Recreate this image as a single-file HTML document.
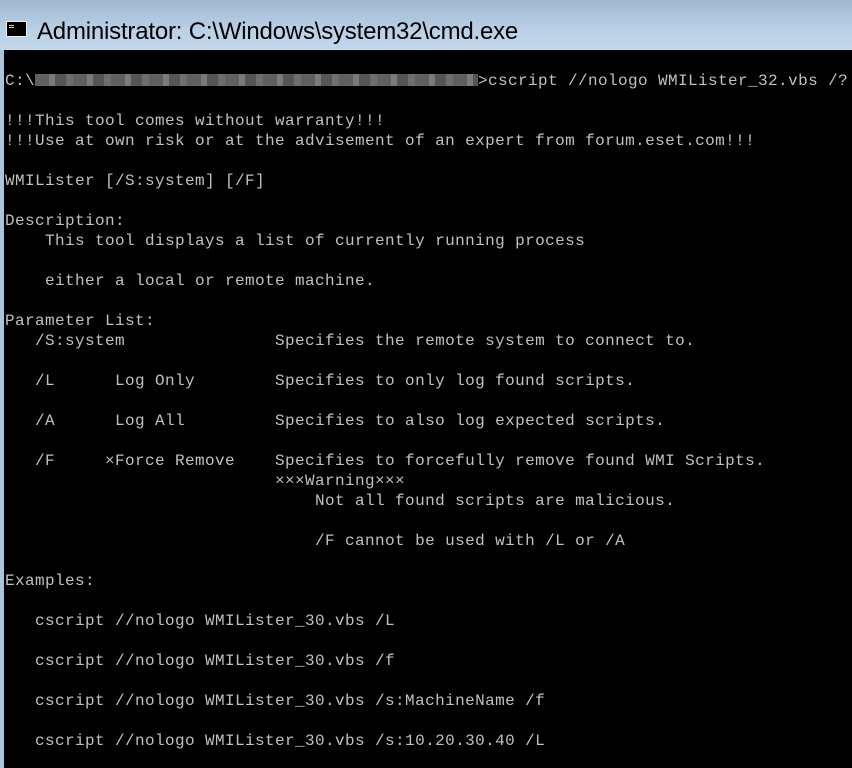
<!DOCTYPE html>
<html><head><meta charset="utf-8"><style>
html,body{margin:0;padding:0;width:852px;height:768px;overflow:hidden;background:#000}
.title{position:absolute;left:0;top:0;width:852px;height:50px;background:linear-gradient(#9fb9d3,#b9d0e6 60%,#c3d7ea)}
.title span{position:absolute;left:37px;top:18px;font:24px "Liberation Sans",sans-serif;color:#000;letter-spacing:-0.2px}
.icon{position:absolute;left:6px;top:21px;width:21px;height:16px;background:#000;border:1px solid #eee;box-sizing:border-box}
.icon:after{content:"";position:absolute;left:2px;top:3px;width:5px;height:1px;background:#ccc;box-shadow:0 2px 0 #ccc}
.con{position:absolute;left:0;top:50px;width:852px;height:718px;background:#000;border-left:4px solid #aac4de;box-sizing:border-box}
pre{margin:0;position:absolute;left:1px;top:1px;font:16px/20px "Liberation Mono",monospace;letter-spacing:0.4px;color:#c0c0c0}
.blur{display:inline-block;width:443px;height:12px;vertical-align:-1px;background:repeating-linear-gradient(90deg,#606060 0 14px,#7a7a7a 14px 20px,#555 20px 31px,#6e6e6e 31px 38px)}
</style></head><body>
<div class="title"><div class="icon"></div><span>Administrator: C:\Windows\system32\cmd.exe</span></div>
<div class="con"><pre>&#8203;
C:\<span class="blur"></span>&gt;cscript //nologo WMILister_32.vbs /?

!!!This tool comes without warranty!!!
!!!Use at own risk or at the advisement of an expert from forum.eset.com!!!

WMILister [/S:system] [/F]

Description:
    This tool displays a list of currently running process

    either a local or remote machine.

Parameter List:
   /S:system               Specifies the remote system to connect to.

   /L      Log Only        Specifies to only log found scripts.

   /A      Log All         Specifies to also log expected scripts.

   /F     ×Force Remove    Specifies to forcefully remove found WMI Scripts.
                           ×××Warning×××
                               Not all found scripts are malicious.

                               /F cannot be used with /L or /A

Examples:

   cscript //nologo WMILister_30.vbs /L

   cscript //nologo WMILister_30.vbs /f

   cscript //nologo WMILister_30.vbs /s:MachineName /f

   cscript //nologo WMILister_30.vbs /s:10.20.30.40 /L
</pre></div>
</body></html>
